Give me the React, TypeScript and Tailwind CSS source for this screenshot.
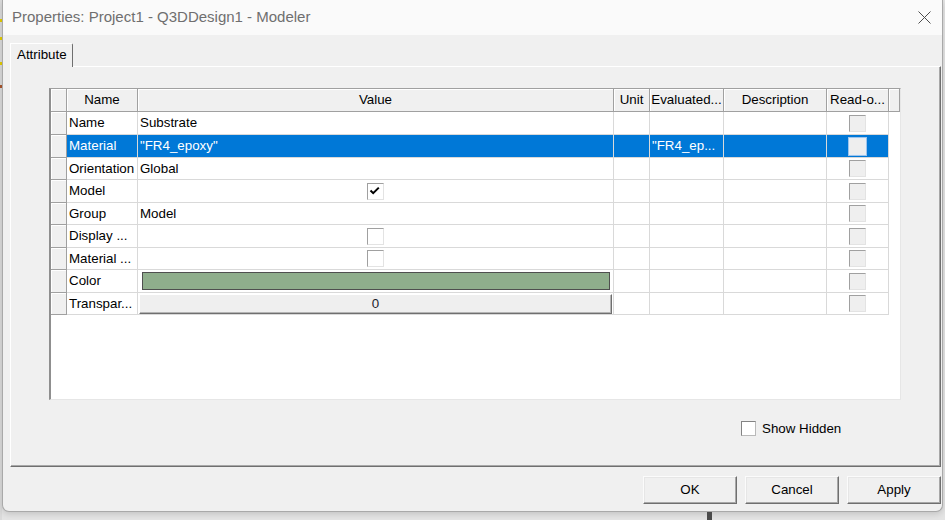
import React from 'react';

type Cell =
  | { kind: 'text'; text: string }
  | { kind: 'check'; checked: boolean }
  | { kind: 'color' }
  | { kind: 'button'; text: string };

const columns = [
  { title: 'Name', w: 'w-[71px]' },
  { title: 'Value', w: 'w-[476px]' },
  { title: 'Unit', w: 'w-[36px]' },
  { title: 'Evaluated...', w: 'w-[74px]' },
  { title: 'Description', w: 'w-[103px]' },
  { title: 'Read-o...', w: 'w-[62px]' },
];

const rows: { label: string; value: Cell; evaluated?: string; h: string; selected?: boolean }[] = [
  { label: 'Name', value: { kind: 'text', text: 'Substrate' }, h: 'h-[23px]' },
  { label: 'Material', value: { kind: 'text', text: '"FR4_epoxy"' }, evaluated: '"FR4_ep...', h: 'h-[23px]', selected: true },
  { label: 'Orientation', value: { kind: 'text', text: 'Global' }, h: 'h-[22px]' },
  { label: 'Model', value: { kind: 'check', checked: true }, h: 'h-[23px]' },
  { label: 'Group', value: { kind: 'text', text: 'Model' }, h: 'h-[22px]' },
  { label: 'Display ...', value: { kind: 'check', checked: false }, h: 'h-[23px]' },
  { label: 'Material ...', value: { kind: 'check', checked: false }, h: 'h-[22px]' },
  { label: 'Color', value: { kind: 'color' }, h: 'h-[23px]' },
  { label: 'Transpar...', value: { kind: 'button', text: '0' }, h: 'h-[22px]' },
];

function CheckBox({ checked, disabled, selected }: { checked?: boolean; disabled?: boolean; selected?: boolean }) {
  if (selected) {
    return <div className="h-[17px] w-[17px] border border-[#e6eef7] bg-[#eeeeee] shadow-[0_0_0_1px_#9fc4ea]" />;
  }
  return (
    <div
      className={`flex h-[17px] w-[17px] items-center justify-center border border-t-[#a0a0a0] border-l-[#a0a0a0] border-r-[#e3e3e3] border-b-[#e3e3e3] ${
        disabled ? 'bg-[#efefef]' : 'bg-white'
      }`}
    >
      {checked && (
        <svg width="15" height="15" viewBox="0 0 15 15">
          <polyline points="2.5,6.5 5.2,9.2 10.8,3.6" fill="none" stroke="#000" strokeWidth="2" />
        </svg>
      )}
    </div>
  );
}

function ValueCell({ cell, selected }: { cell: Cell; selected?: boolean }) {
  const base = `w-[476px] h-full border-r border-b border-[#d9d9d9] flex items-center ${selected ? 'bg-[#0078d7] text-white' : ''}`;
  if (cell.kind === 'text') return <div className={`${base} pl-[2px]`}>{cell.text}</div>;
  if (cell.kind === 'check')
    return (
      <div className={`${base} justify-center`}>
        <CheckBox checked={cell.checked} />
      </div>
    );
  if (cell.kind === 'color')
    return (
      <div className={`${base} pl-[4px] pr-[3px]`}>
        <div className="h-[18px] w-full border border-[#4f4f4f] bg-[#8fae8c]" />
      </div>
    );
  return (
    <div className={`${base} items-start px-px pt-px`}>
      <div className="flex h-[20px] w-full items-center justify-center border border-t-white border-l-white border-r-[#6f6f6f] border-b-[#6f6f6f] bg-[#efefef] text-[#1c1c2c] shadow-[inset_-1px_-1px_0_#b4b4b4]">
        {cell.text}
      </div>
    </div>
  );
}

function PropertyGrid() {
  const headCell = 'h-full flex items-center justify-center border-r border-b border-[#a0a0a0] bg-[#f0f0f0] shadow-[inset_1px_1px_0_#fff]';
  return (
    <div className="h-[312px] w-[852px] overflow-hidden border-l-2 border-t border-r border-b border-l-[#8f8f8f] border-t-[#a0a0a0] border-r-[#e6e6e6] border-b-[#e6e6e6] bg-white">
      <div className="flex h-[23px]">
        <div className={`${headCell} w-[16px]`} />
        {columns.map((c) => (
          <div key={c.title} className={`${headCell} ${c.w}`}>
            {c.title}
          </div>
        ))}
        <div className={`${headCell} w-[11px]`} />
      </div>
      {rows.map((r) => {
        const sel = r.selected ? 'bg-[#0078d7] text-white' : '';
        const cell = 'h-full border-r border-b border-[#d9d9d9] flex items-center';
        return (
          <div key={r.label} className={`flex ${r.h}`}>
            <div className="h-full w-[16px] border-r border-b border-[#a0a0a0] bg-[#f0f0f0] shadow-[inset_1px_1px_0_#fff]" />
            <div className={`${cell} w-[71px] pl-[2px] whitespace-nowrap overflow-hidden ${sel}`}>{r.label}</div>
            <ValueCell cell={r.value} selected={r.selected} />
            <div className={`${cell} w-[36px] ${sel}`} />
            <div className={`${cell} w-[74px] pl-[2px] whitespace-nowrap overflow-hidden ${sel}`}>{r.evaluated ?? ''}</div>
            <div className={`${cell} w-[103px] ${sel}`} />
            <div className={`${cell} w-[62px] justify-center ${sel}`}>
              <CheckBox disabled selected={r.selected} />
            </div>
          </div>
        );
      })}
    </div>
  );
}

function DialogButton({ label }: { label: string }) {
  return (
    <button className="flex h-[28px] w-[94px] items-center justify-center border border-t-[#fbfbfb] border-l-[#fbfbfb] border-r-[#6f6f6f] border-b-[#6f6f6f] bg-[#f0f0f0] text-[13.33px] text-black shadow-[inset_-1px_-1px_0_#a8a8a8,inset_1px_1px_0_#e6e6e6]">
      {label}
    </button>
  );
}

export default function App() {
  return (
    <div className="flex h-[520px] w-[945px] overflow-hidden bg-[#e4e4e4] font-['Liberation_Sans',Arial,sans-serif] text-[13.33px] text-black">
      {/* what shows of the window behind */}
      <div className="flex w-[2px] shrink-0 flex-col bg-[#dadada]">
        <div className="mt-[19px] h-[3px] bg-[#e3cc00]" />
        <div className="mt-[15px] h-[3px] bg-[#e3cc00]" />
        <div className="mt-[22px] h-[3px] bg-[#e3cc00]" />
        <div className="mt-[20px] h-[3px] bg-[#a8552e]" />
      </div>

      <div className="flex flex-col">
        <div className="flex h-[512px] w-[941px] flex-col rounded-b-[7px] border-x border-b border-[#a9a9a9] bg-[#f0f0f0] shadow-[0_2px_6px_rgba(0,0,0,0.15)]">
          {/* title bar */}
          <div className="flex h-[35px] items-center justify-between bg-[#fafafa] pl-[9px] pr-[11px]">
            <span className="text-[15px] text-[#6f6f6f]">Properties: Project1 - Q3DDesign1 - Modeler</span>
            <svg width="13" height="13" viewBox="0 0 13 13">
              <path d="M0.5 0.5 L12.5 12.5 M12.5 0.5 L0.5 12.5" stroke="#4d4d4d" strokeWidth="1" />
            </svg>
          </div>

          <div className="flex flex-col pl-[7px]">
            {/* tab */}
            <div className="relative z-10 -mb-px mt-[8px] flex h-[24px] w-[63px] items-center rounded-tr-[2px] border-l border-t border-r border-l-white border-t-white border-r-[#6f6f6f] bg-[#f0f0f0] pb-[2px] pl-[6px]">
              Attribute
            </div>

            {/* tab page */}
            <div className="flex h-[401px] w-[931px] flex-col border border-l-white border-t-white border-r-[#6f6f6f] border-b-[#6f6f6f] shadow-[inset_-1px_-1px_0_#a8a8a8]">
              <div className="ml-[38px] mt-[21px]">
                <PropertyGrid />
              </div>
              <div className="ml-[730px] mt-[19px] flex items-center">
                <div className="h-[15px] w-[15px] border border-t-[#838383] border-l-[#838383] border-r-[#b9b9b9] border-b-[#b9b9b9] bg-white" />
                <span className="ml-[6px]">Show Hidden</span>
              </div>
            </div>

            {/* buttons */}
            <div className="mt-[9px] flex w-[931px] justify-end gap-[8px]">
              <DialogButton label="OK" />
              <DialogButton label="Cancel" />
              <DialogButton label="Apply" />
            </div>
          </div>
        </div>

        <div className="h-[8px]">
          <div className="ml-[705px] h-full w-[5px] bg-[#4b4b4b]" />
        </div>
      </div>
    </div>
  );
}
